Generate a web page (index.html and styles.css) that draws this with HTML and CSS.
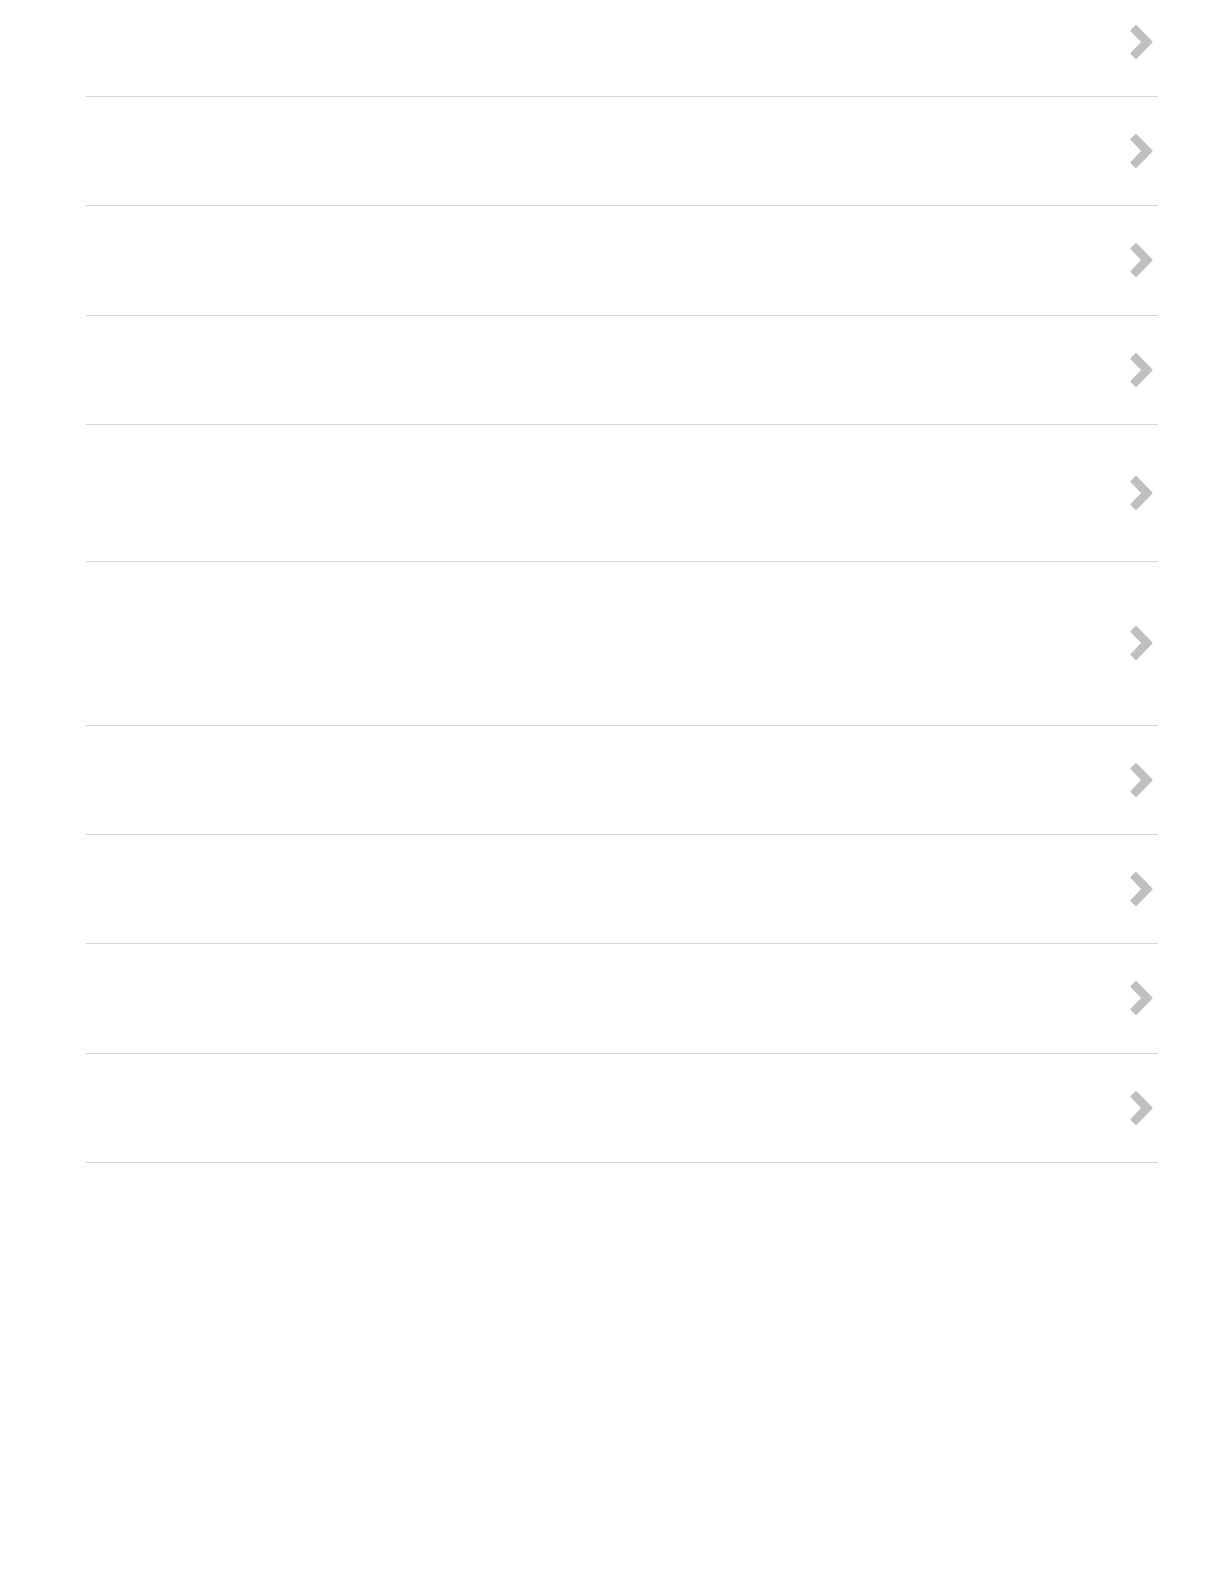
FILE: index.html
```html
<!DOCTYPE html>
<html lang="en">
<head>
    <meta charset="UTF-8">
    <meta name="viewport" content="width=device-width, initial-scale=1.0">
    <title>List</title>
    <link rel="stylesheet" href="styles.css">
</head>
<body>
    <ul class="menu-list">
        <li class="menu-item"><span class="item-label"></span><svg class="chevron" viewBox="0 0 24 38"><path d="M2.5 7.5 L7 3 L22.5 19 L7 35 L2.5 30.5 L13.5 19 Z"/></svg></li>
        <li class="menu-item"><span class="item-label"></span><svg class="chevron" viewBox="0 0 24 38"><path d="M2.5 7.5 L7 3 L22.5 19 L7 35 L2.5 30.5 L13.5 19 Z"/></svg></li>
        <li class="menu-item"><span class="item-label"></span><svg class="chevron" viewBox="0 0 24 38"><path d="M2.5 7.5 L7 3 L22.5 19 L7 35 L2.5 30.5 L13.5 19 Z"/></svg></li>
        <li class="menu-item"><span class="item-label"></span><svg class="chevron" viewBox="0 0 24 38"><path d="M2.5 7.5 L7 3 L22.5 19 L7 35 L2.5 30.5 L13.5 19 Z"/></svg></li>
        <li class="menu-item tall"><span class="item-label"></span><svg class="chevron" viewBox="0 0 24 38"><path d="M2.5 7.5 L7 3 L22.5 19 L7 35 L2.5 30.5 L13.5 19 Z"/></svg></li>
        <li class="menu-item taller"><span class="item-label"></span><svg class="chevron" viewBox="0 0 24 38"><path d="M2.5 7.5 L7 3 L22.5 19 L7 35 L2.5 30.5 L13.5 19 Z"/></svg></li>
        <li class="menu-item"><span class="item-label"></span><svg class="chevron" viewBox="0 0 24 38"><path d="M2.5 7.5 L7 3 L22.5 19 L7 35 L2.5 30.5 L13.5 19 Z"/></svg></li>
        <li class="menu-item"><span class="item-label"></span><svg class="chevron" viewBox="0 0 24 38"><path d="M2.5 7.5 L7 3 L22.5 19 L7 35 L2.5 30.5 L13.5 19 Z"/></svg></li>
        <li class="menu-item"><span class="item-label"></span><svg class="chevron" viewBox="0 0 24 38"><path d="M2.5 7.5 L7 3 L22.5 19 L7 35 L2.5 30.5 L13.5 19 Z"/></svg></li>
        <li class="menu-item"><span class="item-label"></span><svg class="chevron" viewBox="0 0 24 38"><path d="M2.5 7.5 L7 3 L22.5 19 L7 35 L2.5 30.5 L13.5 19 Z"/></svg></li>
    </ul>
</body>
</html>
```

FILE: styles.css
```css
html, body {
    margin: 0;
    padding: 0;
    background: #ffffff;
    font-family: "Liberation Sans", Arial, sans-serif;
    overflow: hidden;
}
.menu-list {
    list-style: none;
    margin: -12.3px 67px 0 86px;
    padding: 0;
}
.menu-item {
    box-sizing: border-box;
    display: flex;
    align-items: center;
    justify-content: space-between;
    height: 109.3px;
    padding-right: 5px;
    border-bottom: 1.3px solid #d6d6d6;
}
.menu-item.tall {
    height: 137.3px;
}
.menu-item.taller {
    height: 163.5px;
}
.item-label {
    flex: 1;
}
.chevron {
    display: block;
    width: 24px;
    height: 38px;
    fill: #bfbfbf;
    stroke: #bfbfbf;
    stroke-width: 2;
    stroke-linejoin: round;
    filter: blur(0.5px);
}
```
